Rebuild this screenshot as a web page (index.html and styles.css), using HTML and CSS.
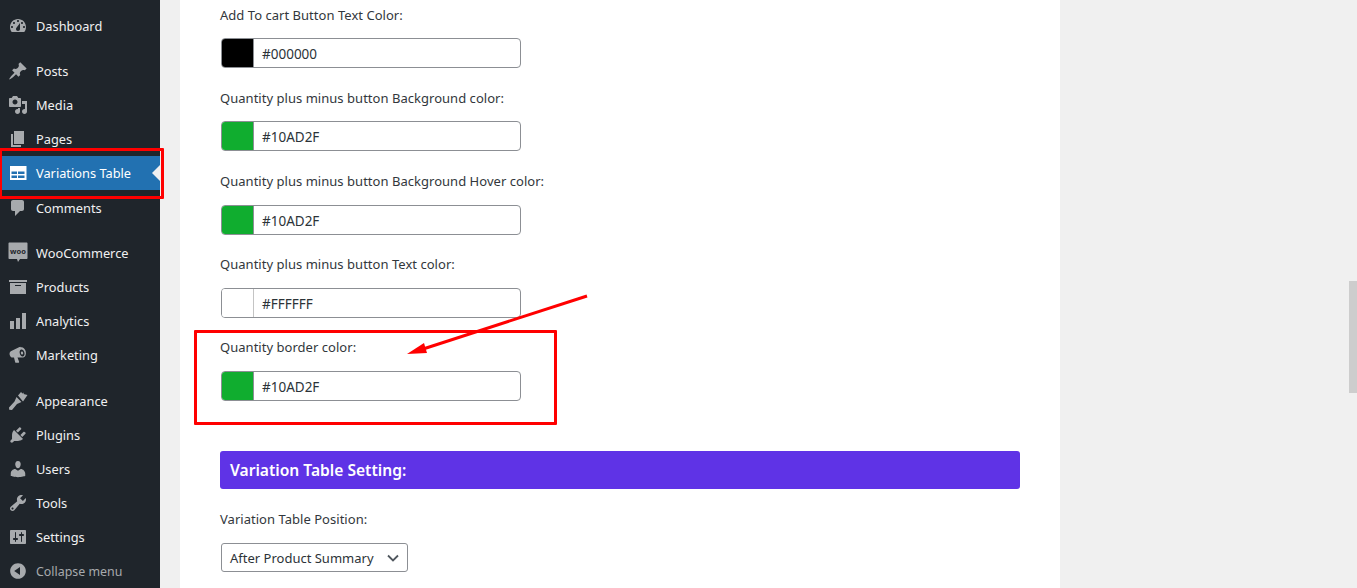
FILE: index.html
```html
<!DOCTYPE html>
<html lang="en">
<head>
<meta charset="utf-8">
<title>Variations Table</title>
<link rel="stylesheet" href="styles.css">
</head>
<body>
<div class="app">
  <nav class="sidebar">
    <ul class="menu">
      <li class="item"><svg class="ic" viewBox="0 0 20 20"><path fill-rule="evenodd" d="M3.76 16h12.48c1.1-1.37 1.76-3.11 1.76-5 0-4.42-3.58-8-8-8s-8 3.58-8 8c0 1.89.66 3.63 1.76 5zM10 4c.55 0 1 .45 1 1s-.45 1-1 1-1-.45-1-1 .45-1 1-1zM6 6c.55 0 1 .45 1 1s-.45 1-1 1-1-.45-1-1 .45-1 1-1zm8 0c.55 0 1 .45 1 1s-.45 1-1 1-1-.45-1-1 .45-1 1-1zm-5.37 5.55L12 7v6c0 1.1-.9 2-2 2s-2-.9-2-2c0-.57.24-1.08.63-1.45zM4 10c.55 0 1 .45 1 1s-.45 1-1 1-1-.45-1-1 .45-1 1-1zm12 0c.55 0 1 .45 1 1s-.45 1-1 1-1-.45-1-1 .45-1 1-1z"/></svg><span>Dashboard</span></li>
    </ul>
    <ul class="menu">
      <li class="item"><svg class="ic" viewBox="0 0 20 20"><path d="M10.44 3.02l1.82-1.82 6.36 6.35-1.83 1.82c-1.05-.68-2.48-.57-3.41.36l-.75.75c-.92.93-1.04 2.35-.35 3.41l-1.83 1.82-2.41-2.41-2.8 2.79c-.42.42-3.38 2.71-3.8 2.29s1.86-3.39 2.28-3.81l2.79-2.79L4.1 9.36l1.83-1.82c1.05.69 2.48.57 3.4-.36l.75-.75c.93-.92 1.05-2.35.36-3.41z"/></svg><span>Posts</span></li>
      <li class="item"><svg class="ic" viewBox="0 0 20 20"><path fill-rule="evenodd" d="M13 11V4c0-.55-.45-1-1-1h-1.67L9 1H5L3.67 3H2c-.55 0-1 .45-1 1v7c0 .55.45 1 1 1h10c.55 0 1-.45 1-1zM7 4.5c1.38 0 2.5 1.12 2.5 2.5S8.38 9.5 7 9.5 4.5 8.38 4.5 7 5.62 4.5 7 4.5zM14 6h5v10.5c0 1.38-1.12 2.5-2.5 2.5S14 17.88 14 16.5s1.12-2.5 2.5-2.5c.17 0 .34.02.5.05V9h-3V6zm-4 8.05V13h2v3.5c0 1.38-1.12 2.5-2.5 2.5S7 17.88 7 16.5 8.12 14 9.5 14c.17 0 .34.02.5.05z"/></svg><span>Media</span></li>
      <li class="item"><svg class="ic" viewBox="0 0 20 20"><path d="M6 15V2h10v13H6zm-1 1h8v2H3V5h2v11z"/></svg><span>Pages</span></li>
      <li class="item current"><svg class="ic" viewBox="0 0 20 20"><path fill-rule="evenodd" d="M2 3h16.500v14H2V3zM3.500 8.500V11H9V8.500H3.500zM10 8.500V11h6.500V8.500H10zM3.500 12.500V15H9v-2.500H3.500zM10 12.500V15h6.500v-2.500H10z"/></svg><span>Variations Table</span></li>
      <li class="item"><svg class="ic" viewBox="0 0 20 20"><path d="M5 2h9c1.100 0 2 .9 2 2v7c0 1.100-.9 2-2 2h-2l-5 5v-5H5c-1.100 0-2-.9-2-2V4c0-1.100.9-2 2-2z"/></svg><span>Comments</span></li>
    </ul>
    <ul class="menu">
      <li class="item"><svg class="ic ic-woo" viewBox="0 0 20 20"><path d="M1.500-.5h17c.6 0 1 .4 1 1V15c0 .6-.4 1-1 1h-6.500L10 19l-1-3H1.500c-.6 0-1-.4-1-1V.5c0-.6.4-1 1-1z"/><text class="woo" x="10" y="10.500">woo</text></svg><span>WooCommerce</span></li>
      <li class="item"><svg class="ic" viewBox="0 0 20 20"><path fill-rule="evenodd" d="M19 3v2H1V3h18zM2 6h16v11H2V6zm11 3V8H7v1h6z"/></svg><span>Products</span></li>
      <li class="item"><svg class="ic" viewBox="0 0 20 20"><path d="M18 18V2h-4v16h4zm-6 0V7H8v11h4zm-6 0v-8H2v8h4z"/></svg><span>Analytics</span></li>
      <li class="item"><svg class="ic" viewBox="0 0 20 20"><path fill-rule="evenodd" d="M12.500 2.300c2.300-.7 4.500 1.200 5.200 3.900.7 2.800-.2 5.600-2.400 6.300-.4.100-.7.100-1.100.100H9.500l1.600 4.200c.2.500-.2 1-.7 1H8c-.4 0-.7-.2-.8-.6l-1.200-4.700H4.600c-1.300 0-2.400-1-2.900-2.600-.4-1.600 0-3 1.100-3.700l8.700-4.100c.3-.1.600-.2 1-.3zm.6 2.200c-1.300.4-1.800 2.200-1.300 4.100.5 2 2 3.300 3.200 2.900 1.300-.4 1.900-2.200 1.400-4.100-.5-2-2-3.300-3.300-2.900zm.5 2c.7-.2 1.300.4 1.500 1.200.2.900-.1 1.600-.7 1.800-.7.200-1.300-.4-1.500-1.200-.2-.9.100-1.600.7-1.800z"/></svg><span>Marketing</span></li>
    </ul>
    <ul class="menu last">
      <li class="item"><svg class="ic" viewBox="0 0 20 20"><path d="M10 4.500L13 1l1.500 1.500L16 1.500 15.500 3l4 1L15 10.500zM8.500 6l5 5-4.500 2-5 6-2.800-.2L1 16.500l5.500-6z"/></svg><span>Appearance</span></li>
      <li class="item"><svg class="ic" viewBox="0 0 20 20"><path d="M13.110 4.360L9.870 7.600 8 5.730l3.240-3.240c.35-.34 1.050-.2 1.560.32.52.51.66 1.210.31 1.550zm-8 1.770l.91-1.120 9.010 9.010-1.190.84c-.71.71-2.630 1.160-3.820 1.160H6.140L4.900 17.260c-.59.59-1.540.59-2.120 0-.59-.58-.59-1.530 0-2.120l1.240-1.240v-3.880c0-1.130.4-3.190 1.090-3.890zm7.260 3.970l3.240-3.240c.34-.35 1.040-.21 1.550.31.52.51.66 1.210.31 1.550l-3.240 3.250z"/></svg><span>Plugins</span></li>
      <li class="item"><svg class="ic" viewBox="0 0 20 20"><path d="M10 9.250c-2.270 0-2.730-3.440-2.730-3.440C7 4.020 7.820 2 9.970 2c2.160 0 2.980 2.020 2.710 3.810 0 0-.41 3.440-2.680 3.440zm0 2.570L12.720 10c2.390 0 4.520 2.330 4.520 4.530v2.490s-3.650 1.130-7.240 1.130c-3.650 0-7.240-1.130-7.240-1.130v-2.490c0-2.250 1.940-4.480 4.470-4.480z"/></svg><span>Users</span></li>
      <li class="item"><svg class="ic" viewBox="0 0 20 20"><path fill-rule="evenodd" d="M16.680 9.770c-1.340 1.340-3.300 1.670-4.950.99l-5.410 6.520c-.99.99-2.590.99-3.580 0s-.99-2.590 0-3.570l6.520-5.420c-.68-1.650-.35-3.610.99-4.950 1.280-1.280 3.120-1.620 4.720-1.060l-2.890 2.890 2.820 2.820 2.860-2.870c.53 1.580.18 3.390-1.080 4.650zM3.810 16.210c.4.39 1.040.39 1.430 0 .4-.4.4-1.040 0-1.430-.39-.4-1.030-.4-1.430 0-.39.39-.39 1.030 0 1.430z"/></svg><span>Tools</span></li>
      <li class="item"><svg class="ic" viewBox="0 0 20 20"><path fill-rule="evenodd" d="M18 16V4c0-.55-.45-1-1-1H3c-.55 0-1 .45-1 1v12c0 .55.45 1 1 1h14c.55 0 1-.45 1-1zM8 11h1c.55 0 1 .45 1 1s-.45 1-1 1H8v1.500c0 .28-.22.5-.5.5s-.5-.22-.5-.5V13H6c-.55 0-1-.45-1-1s.45-1 1-1h1V5.500c0-.28.22-.5.5-.5s.5.22.5.5V11zm5-2h-1c-.55 0-1-.45-1-1s.45-1 1-1h1V5.500c0-.28.22-.5.5-.5s.5.22.5.5V7h1c.55 0 1 .45 1 1s-.45 1-1 1h-1v5.500c0 .28-.22.5-.5.5s-.5-.22-.5-.5V9z"/></svg><span>Settings</span></li>
      <li class="item collapse"><svg class="ic" viewBox="0 0 20 20"><path fill-rule="evenodd" d="M10 2.160c4.330 0 7.840 3.510 7.840 7.840s-3.510 7.840-7.840 7.840S2.160 14.330 2.160 10 5.710 2.160 10 2.160zm2 11.720V6.120L6.180 9.970z"/></svg><span>Collapse menu</span></li>
    </ul>
  </nav>

  <main class="content">
    <section class="panel">
      <div class="field">
        <label class="label">Add To cart Button Text Color:</label>
        <div class="color"><span class="swatch black"></span><span class="hex">#000000</span></div>
      </div>
      <div class="field">
        <label class="label">Quantity plus minus button Background color:</label>
        <div class="color"><span class="swatch green"></span><span class="hex">#10AD2F</span></div>
      </div>
      <div class="field">
        <label class="label">Quantity plus minus button Background Hover color:</label>
        <div class="color"><span class="swatch green"></span><span class="hex">#10AD2F</span></div>
      </div>
      <div class="field">
        <label class="label">Quantity plus minus button Text color:</label>
        <div class="color"><span class="swatch white"></span><span class="hex">#FFFFFF</span></div>
      </div>
      <div class="field">
        <label class="label">Quantity border color:</label>
        <div class="color"><span class="swatch green"></span><span class="hex">#10AD2F</span></div>
      </div>
      <h2 class="heading">Variation Table Setting:</h2>
      <div class="field select-field">
        <label class="label">Variation Table Position:</label>
        <div class="select"><span>After Product Summary</span>
          <svg class="chev" viewBox="0 0 12 8"><path d="M1 1.500l5 5 5-5"/></svg>
        </div>
      </div>
    </section>
    <div class="thumb"></div>
  </main>
</div>

<div class="mark mark-menu"></div>
<div class="mark mark-field"></div>
<svg class="arrow" viewBox="0 0 1357 588"><path class="shaft" d="M587 296L420 350"/><path class="head" d="M407 354l17-11 3 10z"/></svg>
</body>
</html>
```
FILE: styles.css
```css
* { box-sizing: border-box; }
html, body { margin: 0; height: 588px; overflow: hidden; }
body {
  font-family: "Noto Sans", "Open Sans", sans-serif;
  font-size: 13px;
  background: #f0f0f0;
  color: #2c3338;
  position: relative;
}
.app { display: flex; height: 588px; }

/* Sidebar */
.sidebar { width: 160px; flex: none; background: #1f252b; padding-top: 9px; font-size: 12.8px; }
.menu { list-style: none; margin: 0 0 11px; padding: 0; }
.menu.last { margin: 0; }
.menu:nth-child(3) { margin-bottom: 12px; }
.item {
  height: 34px;
  display: flex;
  align-items: center;
  gap: 8px;
  padding-left: 8px;
  color: #f0f0f1;
  position: relative;
}
.ic { width: 20px; height: 20px; fill: #a7aaad; flex: none; }
.ic-woo { overflow: visible; }
.woo { font-size: 7.5px; font-weight: 700; fill: #1f252b; text-anchor: middle; font-family: "Noto Sans", sans-serif; }
.current { background: #2271b1; color: #fff; margin-bottom: 1px; }
.current .ic { fill: #fff; }
.current::after {
  content: "";
  position: absolute;
  right: 0;
  top: 50%;
  margin-top: -8px;
  border: 8px solid transparent;
  border-right-color: #f0f0f1;
  border-left-width: 0;
}
.collapse { color: #a7aaad; font-size: 12.4px; }

/* Main */
.content { flex: 1; padding-left: 20px; position: relative; }
.panel { width: 880px; height: 588px; background: #fff; padding: 0 40px; overflow: hidden; }
.field { padding-top: 6px; height: 83px; }
.field:nth-child(n+3) .color { margin-top: 14px; }
.label { display: block; height: 19px; line-height: 19px; color: #32373c; font-size: 13px; letter-spacing: .03px; }
.color {
  margin: 13px 0 0 1px;
  width: 300px;
  height: 30px;
  display: flex;
  align-items: center;
  border: 1px solid #8c8f94;
  border-radius: 4px;
  background: #fff;
  overflow: hidden;
}
.swatch { width: 32px; height: 100%; border-right: 1px solid #8c8f94; flex: none; }
.swatch.black { background: #000; }
.swatch.green { background: #10ad2f; }
.swatch.white { background: #fff; border-right-color: #c4c4c4; }
.hex { margin-left: 8px; padding-top: 1px; font-size: 13.5px; color: #2c3338; }
.heading {
  margin: 36px 0 0;
  height: 38px;
  line-height: 38px;
  background: #5f33e6;
  border-radius: 3px;
  padding-left: 10px;
  color: #fff;
  font-size: 15.6px;
  font-weight: 600;
}
.select-field { padding-top: 21px; }
.select {
  margin: 14px 0 0 1px;
  width: 187px;
  height: 29px;
  display: flex;
  align-items: center;
  justify-content: space-between;
  padding: 0 8px 0 8px;
  border: 1px solid #8c8f94;
  border-radius: 3px;
  font-size: 13px;
  color: #2c3338;
}
.chev { width: 12px; height: 8px; fill: none; stroke: #50575e; stroke-width: 1.800; }
.thumb { position: absolute; right: 0; top: 281px; width: 8px; height: 112px; background: #cdcdcd; }

/* Annotations laid over the screenshot */
.mark { position: absolute; border: 3px solid #f00; border-radius: 1px; }
.mark-menu { left: -1px; top: 148px; width: 165px; height: 51px; }
.mark-field { left: 194px; top: 330px; width: 363px; height: 95px; }
.arrow { position: absolute; left: 0; top: 0; width: 1357px; height: 588px; pointer-events: none; }
.shaft { stroke: #f00; stroke-width: 3px; fill: none; }
.head { fill: #f00; }
```
